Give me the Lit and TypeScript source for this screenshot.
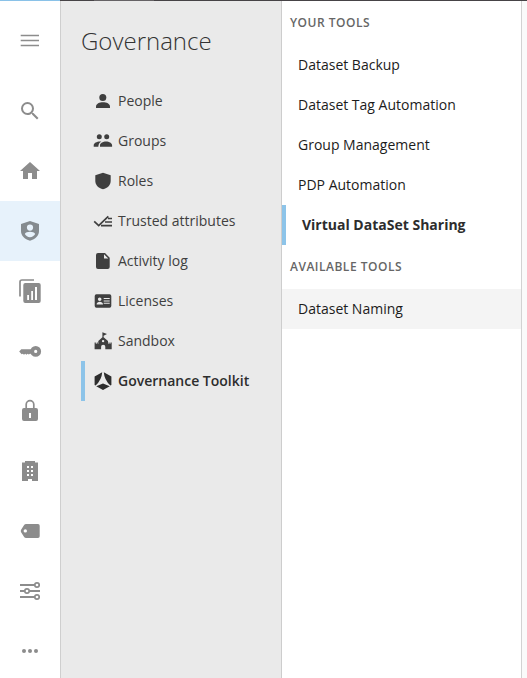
import { LitElement, html, css, svg } from "lit";
import { customElement } from "lit/decorators.js";
import { classMap } from "lit/directives/class-map.js";

const railIcons = [
  { name: "menu", art: svg`<path d="M2.7 6.4H21M2.7 11.5H21M2.7 16.500H21" fill="none" stroke="currentColor" stroke-width="1.500"/>` },
  { name: "search", art: svg`<path d="M15.5 14h-.79l-.28-.27A6.47 6.47 0 0 0 16 9.5 6.5 6.5 0 1 0 9.500 16c1.610 0 3.090-.59 4.230-1.570l.27.28v.79l5 4.990L20.490 19l-4.990-5zm-6 0a4.500 4.500 0 1 1 0-9 4.500 4.500 0 0 1 0 9z"/>` },
  { name: "home", art: svg`<path d="M10 20v-6h4v6h5v-8h3L12 3 2 12h3v8z"/>` },
  { name: "governance", art: svg`<path fill-rule="evenodd" d="M12 2 21 5v7c0 4.700-3.600 8.300-9 9.700C6.600 20.300 3 16.700 3 12V5zM12 5.500a3.100 3.100 0 1 0 0 6.200 3.100 3.100 0 0 0 0-6.200zM6.800 15c1.200 2 2.900 3.200 5.200 3.200s4-1.200 5.200-3.200c-.5-1.500-3-2.300-5.200-2.300s-4.700.8-5.200 2.300z"/>` },
  { name: "reports", art: svg`<path d="M2 17.500V3q0-2 2-2h12" fill="none" stroke="currentColor" stroke-width="1.700"/><path fill-rule="evenodd" d="M7.300 4h13.400q2 0 2 2v16q0 2-2 2H7.300q-2 0-2-2V6q0-2 2-2zM9.200 16v5H11v-5zM13.200 12v9H15v-9zM17 8v13h2V8z"/>` },
  { name: "key", art: svg`<circle cx="17.700" cy="12.400" r="3.500" fill="none" stroke="currentColor" stroke-width="3.800"/><path d="M14 10.200H3.300L1.200 12.400 3.600 15.200 4.800 14.800 6 15.800 7.200 14.800 8.400 15.800 9.600 14.800 10.800 15.600 12 14.800H14z"/>` },
  { name: "lock", art: svg`<path d="M8.200 10V5.500a3.800 3.800 0 0 1 7.600 0V10" fill="none" stroke="currentColor" stroke-width="1.700"/><path fill-rule="evenodd" d="M6 9h12q2 0 2 2v9q0 2-2 2H6q-2 0-2-2v-9q0-2 2-2zM11 14v5h2v-5z"/>` },
  { name: "company", art: svg`<path fill-rule="evenodd" d="M7 2h10v1.500h3V22h-6v-2h-4v2H4V3.500h3zM9 7v2h2V7zM13 7v2h2V7zM9 11v2h2v-2zM13 11v2h2v-2zM9 15v2h2v-2zM13 15v2h2v-2z"/>` },
  { name: "tag", art: svg`<path fill-rule="evenodd" d="M8 5h12q1.700 0 1.700 1.700v10.600Q21.700 19 20 19H8q-1 0-1.700-.8l-3.200-5q-.8-1.200 0-2.400l3.200-5Q7 5 8 5zM7.300 10.200a1.700 1.700 0 1 0 0 3.400 1.700 1.700 0 0 0 0-3.400z"/>` },
  { name: "settings", art: svg`<path d="M2 6h14.700M21.300 6h.7M2 12h4.700M11.300 12H22M2 18h14.700M21.300 18h.7" fill="none" stroke="currentColor" stroke-width="1.800"/><g fill="none" stroke="currentColor" stroke-width="1.700"><circle cx="19" cy="6" r="2.200"/><circle cx="9" cy="12" r="2.200"/><circle cx="19" cy="18" r="2.200"/></g>` },
  { name: "more", art: svg`<circle cx="6" cy="12" r="2"/><circle cx="12" cy="12" r="2"/><circle cx="18" cy="12" r="2"/>` },
];

const navItems = [
  { label: "People", art: svg`<circle cx="9.800" cy="6.600" r="3.500"/><path d="M3 17v-1.500c0-2.700 3.500-4.200 7-4.200s7 1.500 7 4.200V17z"/>` },
  { label: "Groups", art: svg`<circle cx="6.300" cy="5.800" r="2.500"/><circle cx="13.700" cy="5.800" r="2.500"/><path d="M.7 15.800v-1.500c0-2.400 3.500-4.200 7.600-3.800-1.900 1.200-2.800 2.700-3 5.300zM7 15.800v-1.500c0-2.300 3-3.900 6-3.900 3.200 0 6.100 1.600 6.100 3.900v1.500z"/>` },
  { label: "Roles", art: svg`<path d="m10 1.700 7.700 2.600v5.400c0 4.200-3 7.300-7.700 8.600-4.700-1.300-7.700-4.400-7.700-8.600V4.300z"/>` },
  { label: "Trusted attributes", art: svg`<path d="m1.200 10.300 4.500 4.300 9.600-9.300M15 7.500h4M12 11h7M8 14.700h11" fill="none" stroke="currentColor" stroke-width="1.700"/>` },
  { label: "Activity log", art: svg`<path fill-rule="evenodd" d="M5 2h7l4.700 4.800V16q0 2-2 2H5q-2 0-2-2V4q0-2 2-2zM11 3.300v4.200h4.300z"/>` },
  { label: "Licenses", art: svg`<path fill-rule="evenodd" d="M3.400 3.200h13.200q1.700 0 1.700 1.700v10.200q0 1.700-1.700 1.700H3.400q-1.700 0-1.700-1.700V4.900q0-1.700 1.700-1.700zM6.700 6.400a1.800 1.800 0 1 0 0 3.600 1.800 1.800 0 0 0 0-3.600zM3.600 13.400H10c0-1.800-1.600-2.700-3.200-2.700s-3.200.9-3.200 2.700zM10.700 7v1h6V7zM10.700 9.400v1h6v-1zM10.700 11.800v1h6v-1z"/>` },
  { label: "Sandbox", art: svg`<path fill-rule="evenodd" d="M9.400 1.300 14 3 10.600 4.800V6.300L15 10V13h.5v-1.500h1v1.200h1V11.500h1.200v6.800h-6.400v-2.500a2.100 2.100 0 0 0-4.200 0v2.500H1.600v-6.800h1.200v1.200h1v-1.200h1V13h.5V10L9.400 6.300zM10.100 8.900a1.200 1.200 0 1 0 0 2.400 1.200 1.200 0 0 0 0-2.400z"/>` },
  { label: "Governance Toolkit", active: true, art: svg`<path d="M9.200 1.200Q8.800 8.500 2.600 14.600l-1-.6V5.600zM10.800 1.200Q11.200 8.500 17.400 14.600l1-.6V5.600zM10 12.600 16.800 15.300 10 19 3.200 15.300z"/>` },
];

const toolGroups = [
  { heading: "YOUR TOOLS", tools: [
    { label: "Dataset Backup" }, { label: "Dataset Tag Automation" },
    { label: "Group Management" }, { label: "PDP Automation" },
    { label: "Virtual DataSet Sharing", active: true },
  ] },
  { heading: "AVAILABLE TOOLS", tools: [{ label: "Dataset Naming", hover: true }] },
];

@customElement("app-root")
class AppRoot extends LitElement {
  static styles = css`
    :host {
      display: grid;
      grid-template-rows: 1px 1fr;
      height: 678px;
      overflow: hidden;
      font: 14px/20px "Open Sans", sans-serif;
      background: #fafafa;
    }
    .topbar { display: flex; background: #464346; }
    .topbar .accent { width: 60px; background: #8ac2e8; }
    .topbar .tab { width: 60px; margin-left: 34px; background: #656265; }
    .page { display: grid; grid-template-columns: 60px 221px 241px 1fr; min-height: 0; }
    .rail { background: #fff; padding-top: 10px; color: #8c8c8c; }
    .slot { height: 60px; display: grid; place-items: center; }
    .slot.first { margin-bottom: 10px; }
    .slot.active { background: #e7f2fb; color: #858b8f; }
    svg { display: block; fill: currentColor; flex: none; }
    .nav {
      box-sizing: border-box;
      background: #eaeaea;
      border-left: 1px solid #cfcfcf;
      padding: 20px 0 0 20px;
      color: #3f3f3f;
    }
    h1 { margin: 0 0 20px; font-size: 24px; line-height: 40px; font-weight: 300; color: #333; }
    .item {
      box-sizing: border-box;
      height: 40px;
      display: flex;
      align-items: center;
      gap: 5px;
      border-left: 4px solid transparent;
      padding-left: 8px;
      white-space: nowrap;
    }
    .item.active { border-color: #8dc4e9; font-weight: 600; color: #2d2d2d; }
    .tools {
      background: #fff;
      border-left: 1px solid #cdcdcd;
      border-right: 1px solid #d2d2d2;
      color: #1c1c1c;
    }
    h2 { margin: 0; padding: 2px 0 2px 8px; font-size: 12px; line-height: 40px; height: 40px; font-weight: 600; letter-spacing: 0.5px; color: #666; }
    .tool { box-sizing: border-box; height: 40px; line-height: 40px; padding-left: 16px; white-space: nowrap; }
    .tool.active { border-left: 4px solid #8dc4e9; font-weight: 700; color: #2d2d2d; }
    .tool.hover { background: #f4f4f4; }
  `;

  render() {
    return html`
      <div class="topbar"><div class="accent"></div><div class="tab"></div></div>
      <div class="page">
        <nav class="rail">
          ${railIcons.map((icon, i) => html`
            <div class=${classMap({ slot: true, first: i === 0, active: icon.name === "governance" })}>
              <svg width="24" height="24" viewBox="0 0 24 24">${icon.art}</svg>
            </div>`)}
        </nav>
        <nav class="nav">
          <h1>Governance</h1>
          ${navItems.map((item) => html`
            <div class=${classMap({ item: true, active: !!item.active })}>
              <svg width="20" height="20" viewBox="0 0 20 20">${item.art}</svg>
              <span>${item.label}</span>
            </div>`)}
        </nav>
        <main class="tools">
          ${toolGroups.map((group) => html`
            <h2>${group.heading}</h2>
            ${group.tools.map((tool: { label: string; active?: boolean; hover?: boolean }) => html`
              <div class=${classMap({ tool: true, active: !!tool.active, hover: !!tool.hover })}>${tool.label}</div>`)}
          `)}
        </main>
      </div>
    `;
  }
}
